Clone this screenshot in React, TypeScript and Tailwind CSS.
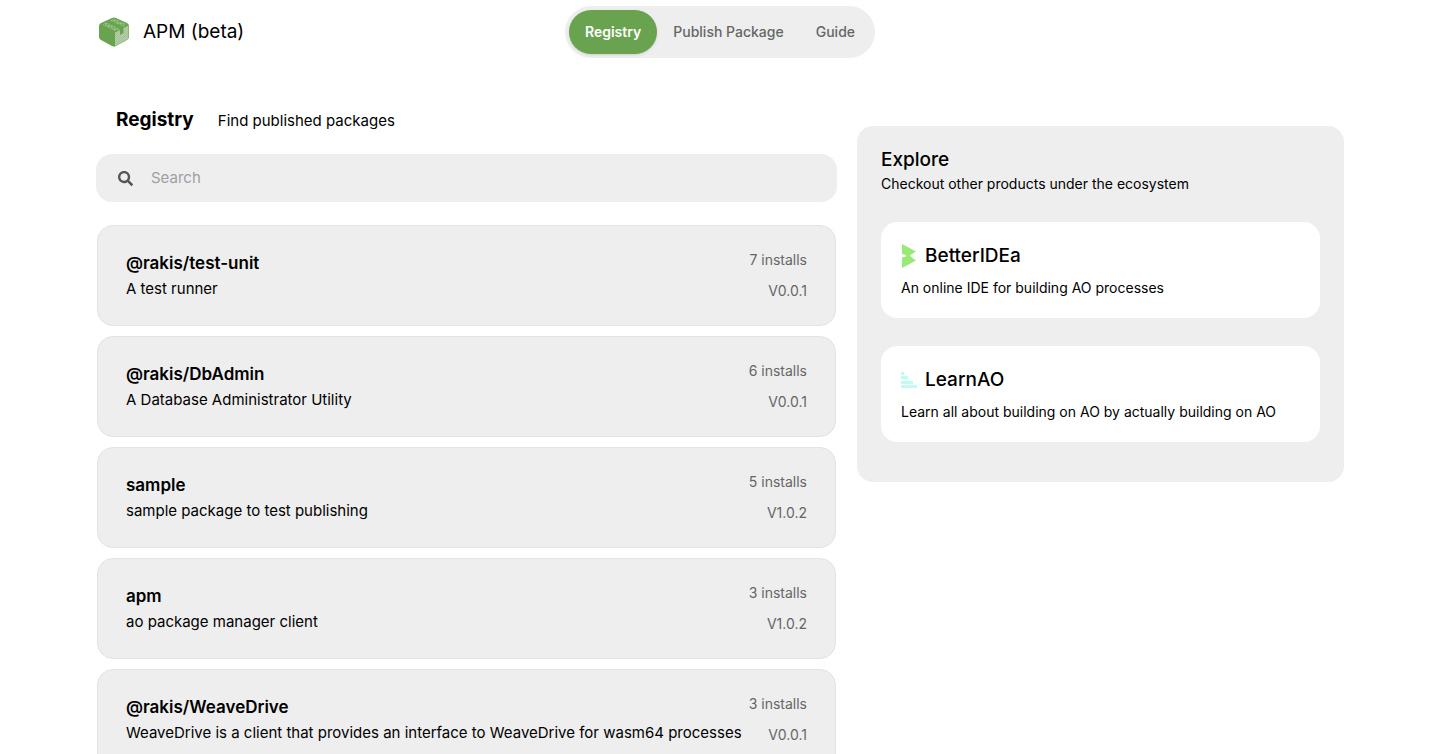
import { useState } from "react"
import { FaSearch } from "react-icons/fa"

const packages = [
  { name: "@rakis/test-unit", description: "A test runner", installs: 7, version: "0.0.1" },
  { name: "@rakis/DbAdmin", description: "A Database Administrator Utility", installs: 6, version: "0.0.1" },
  { name: "sample", description: "sample package to test publishing", installs: 5, version: "1.0.2" },
  { name: "apm", description: "ao package manager client", installs: 3, version: "1.0.2" },
  {
    name: "@rakis/WeaveDrive",
    description: "WeaveDrive is a client that provides an interface to WeaveDrive for wasm64 processes",
    installs: 3,
    version: "0.0.1",
  },
]

const Logo: React.FC = () => (
  <svg width="30" height="30" viewBox="0 0 30 30" aria-hidden="true">
    <defs>
      <pattern id="dots" width="3" height="3" patternUnits="userSpaceOnUse">
        <rect width="3" height="3" fill="#84b672" />
        <rect width="1" height="1" fill="#a9caa0" />
        <rect x="2" y="1" width="1" height="1" fill="#6aa84f" />
      </pattern>
      <pattern id="mesh" width="2" height="2" patternUnits="userSpaceOnUse">
        <rect width="2" height="2" fill="#bccbb6" />
        <rect width="1" height="1" fill="#93cf78" />
        <rect x="1" y="1" width="1" height="1" fill="#a9bba2" />
      </pattern>
    </defs>
    <path d="M0 9Q0 7 2 6L13 1Q15 0 17 1L28 6Q30 7 30 9V20Q30 22 28 23L17 29Q15 30 13 29L2 23Q0 22 0 20Z" fill="#6aa350" />
    <path d="M3 7.500 7.500 5.500 21 12 16 14Z" fill="url(#dots)" />
    <path d="M11 3.500 15 1.500 27.500 7.500 24 9.500Z" fill="url(#dots)" />
    <path d="M16 15.500 21 13V18L24.500 16V11L29.500 8.500V20Q29.500 22 28 22.500L17 28.500 16 29Z" fill="url(#mesh)" />
  </svg>
)

const BetterIdeaIcon: React.FC = () => (
  <svg width="16" height="26" viewBox="0 0 16 26" aria-hidden="true">
    <path d="M1 1 15 8.500 9.500 12V13.500L15 17.500 1 25V14.500L5 13.500V12L1 11Z" fill="#98e975" />
  </svg>
)

const LearnAoIcon: React.FC = () => (
  <svg width="16" height="16" viewBox="0 0 16 16" fill="#bffdf0" shapeRendering="crispEdges" aria-hidden="true">
    <rect width="3" height="3" />
    <rect y="4" width="7" height="3" />
    <rect y="9" width="12" height="3" />
    <rect y="13" width="16" height="3" />
  </svg>
)

const Navbar: React.FC = () => {
  return (
    <header className="grid grid-cols-[1fr_auto_1fr] items-center pt-[6px]">
      <a href="#" className="flex items-center gap-x-[14px] pl-[3px] text-[19px] leading-7">
        <Logo />
        APM (beta)
      </a>
      <nav className="flex rounded-full bg-[#eeeeee] p-1 text-sm font-medium text-[#666666]">
        <a href="#registry" className="rounded-full bg-[#6aa350] px-4 py-3 font-semibold text-white shadow">
          Registry
        </a>
        <a href="#publish" className="px-4 py-3">
          Publish Package
        </a>
        <a href="#guide" className="px-4 py-3">
          Guide
        </a>
      </nav>
    </header>
  )
}

const Product: React.FC<{ icon: React.ReactNode; name: string; text: string }> = ({ icon, name, text }) => {
  return (
    <a href="#" className="block rounded-2xl bg-white p-5">
      <div className="flex items-center gap-x-2 text-[19px] leading-7 font-medium">
        {icon}
        {name}
      </div>
      <p className="mt-2 text-sm">{text}</p>
    </a>
  )
}

export default function App() {
  const [search, setSearch] = useState("")
  const results = packages.filter((p) => p.name.toLowerCase().includes(search.toLowerCase()))

  return (
    <div className="min-h-screen bg-white px-24 pb-6 font-[Inter,sans-serif] text-[15px] leading-6 text-black">
      <Navbar />
      <main className="mt-12 grid grid-cols-[741fr_487fr] items-start gap-x-5">
        <section>
          <div className="flex items-baseline gap-x-6 px-5">
            <h1 className="text-[19px] leading-7 font-bold">Registry</h1>
            <p>Find published packages</p>
          </div>
          <label className="mt-5 flex h-12 items-center gap-x-[18px] rounded-2xl bg-[#eeeeee] px-[22px]">
            <FaSearch className="size-[15px] text-[#555555]" />
            <input
              type="text"
              aria-label="Search"
              placeholder="Search"
              value={search}
              onChange={(e) => setSearch(e.target.value)}
              className="grow bg-transparent outline-none placeholder:text-[#9f9f9f]"
            />
          </label>
          <div className="mx-px mt-[23px] flex flex-col gap-y-[10px]">
            {results.map((p) => (
              <a
                key={p.name}
                href="#"
                className="flex justify-between rounded-2xl border border-[#e3e3e3] bg-[#eeeeee] px-7 py-6"
              >
                <div>
                  <h2 className="text-[17px] leading-[27px] font-semibold">{p.name}</h2>
                  <p>{p.description}</p>
                </div>
                <div className="flex shrink-0 flex-col justify-between text-right text-sm text-[#666666]">
                  <span>{p.installs} installs</span>
                  <span>V{p.version}</span>
                </div>
              </a>
            ))}
          </div>
        </section>
        <aside className="mt-5 rounded-2xl bg-[#eeeeee] px-6 pt-5 pb-10">
          <h2 className="text-[19px] leading-7 font-medium">Explore</h2>
          <p className="text-sm">Checkout other products under the ecosystem</p>
          <div className="mt-7 flex flex-col gap-y-7">
            <Product icon={<BetterIdeaIcon />} name="BetterIDEa" text="An online IDE for building AO processes" />
            <Product icon={<LearnAoIcon />} name="LearnAO" text="Learn all about building on AO by actually building on AO" />
          </div>
        </aside>
      </main>
    </div>
  )
}
